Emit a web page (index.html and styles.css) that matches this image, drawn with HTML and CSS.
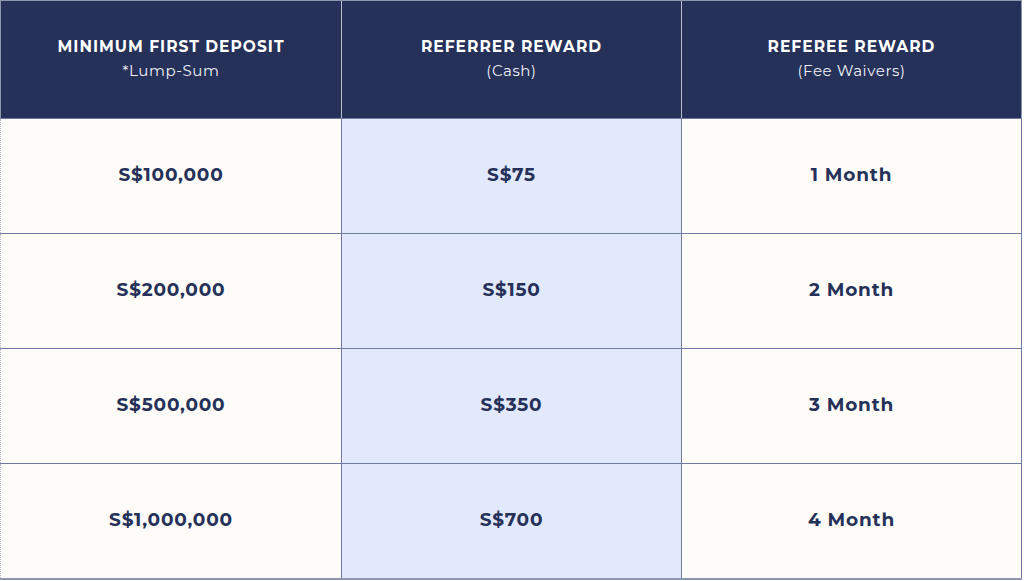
FILE: index.html
```html
<!DOCTYPE html>
<html>
<head>
<meta charset="utf-8">
<link rel="stylesheet" href="styles.css">
</head>
<body>
<div class="table">
  <div class="head">
    <div class="hcell"><div class="htitle">MINIMUM FIRST DEPOSIT</div><div class="hsub">*Lump-Sum</div></div>
    <div class="hcell"><div class="htitle">REFERRER REWARD</div><div class="hsub">(Cash)</div></div>
    <div class="hcell"><div class="htitle">REFEREE REWARD</div><div class="hsub">(Fee Waivers)</div></div>
  </div>
  <div class="row">
    <div class="cell first">S$100,000</div><div class="cell mid">S$75</div><div class="cell">1 Month</div>
  </div>
  <div class="row">
    <div class="cell first">S$200,000</div><div class="cell mid">S$150</div><div class="cell">2 Month</div>
  </div>
  <div class="row">
    <div class="cell first">S$500,000</div><div class="cell mid">S$350</div><div class="cell">3 Month</div>
  </div>
  <div class="row last">
    <div class="cell first">S$1,000,000</div><div class="cell mid">S$700</div><div class="cell">4 Month</div>
  </div>
</div>
</body>
</html>
```
FILE: styles.css
```css
html, body { margin: 0; padding: 0; background: #ffffff; }
body { font-family: "Montserrat", "Inter", "Lato", "Liberation Sans", sans-serif; }
.table { width: 1022px; display: flex; flex-direction: column; }
.head {
  display: grid; grid-template-columns: 341px 340px 341px; height: 118px;
  background: #263159; border-top: 1px solid #8f97b0; box-sizing: border-box;
}
.hcell {
  display: flex; flex-direction: column; align-items: center; justify-content: center;
  color: #ffffff; border-left: 1px solid #b8bed0; padding-bottom: 2px; box-sizing: border-box;
}
.hcell:first-child { border-left: 1px solid #8f97b0; }
.hcell:last-child { border-right: 1px solid #8f97b0; }
.htitle { font-weight: 700; font-size: 15.5px; letter-spacing: 1px; line-height: 20px; }
.hsub { font-weight: 400; font-size: 15px; line-height: 20px; margin-top: 4px; color: #eef0f6; letter-spacing: 0.6px; }
.row {
  display: grid; grid-template-columns: 341px 340px 341px; height: 115px;
  border-top: 1px solid #6f7ba0; box-sizing: border-box;
}
.row.last { height: 117px; border-bottom: 2px solid #8f97b0; }
.cell {
  display: flex; align-items: center; justify-content: center;
  background: #fdfcf8; color: #263159; font-weight: 700; font-size: 18.5px;
  border-left: 1px solid #6f7ba0; letter-spacing: 0.8px; padding-bottom: 3px; box-sizing: border-box;
}
.cell.first { border-left: 1px dotted #b8bcc8; }
.cell:last-child { border-right: 1px solid #6f7ba0; }
.cell.mid { background: #e2e9fd; }
```
